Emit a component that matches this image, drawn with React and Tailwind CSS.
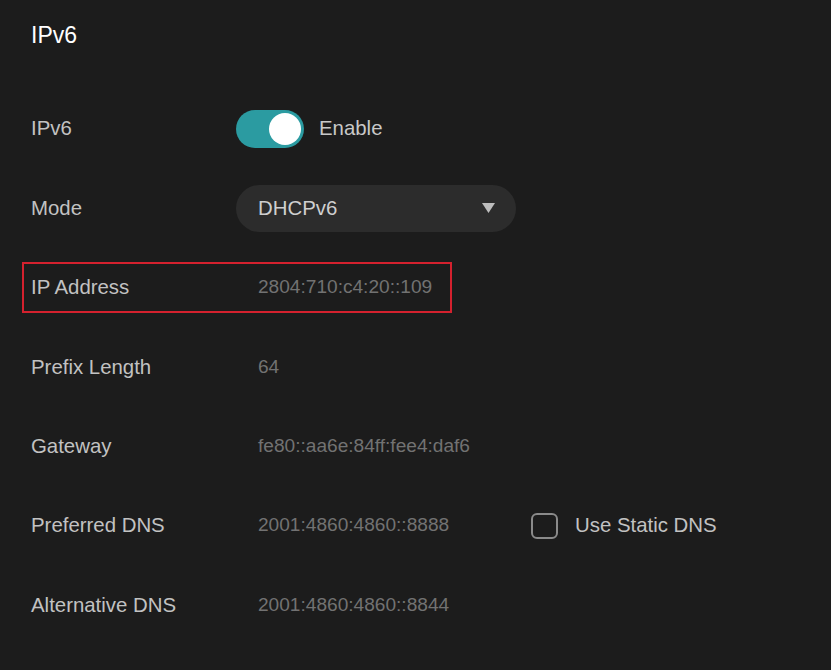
import React from "react";

const font = { fontFamily: '"Liberation Sans", Arial, sans-serif' };

function Row({ label, children, highlight }) {
  return (
    <div className="relative flex h-[79.4px] items-center">
      {highlight && (
        <div className="pointer-events-none absolute left-[-9px] top-[14px] h-[51px] w-[430px] border-2 border-[#d4212e]" />
      )}
      <div className="w-[205px] shrink-0 text-[20.4px] text-[#c2c2c2]">{label}</div>
      {children}
    </div>
  );
}

function Value({ children, className = "" }) {
  return <div className={"pl-[22px] text-[19.1px] text-[#727272] " + className}>{children}</div>;
}

export default function App() {
  return (
    <div className="min-h-screen w-full bg-[#1c1c1c] pl-[31px]" style={font}>
      <div className="flex h-[70px] items-center text-[23px] text-white">IPv6</div>

      <div className="mt-[19px]">
        <Row label="IPv6">
          <div className="flex items-center">
            <div className="flex h-[38px] w-[68px] items-center justify-end rounded-full bg-[#2b9ba1] pr-[3px]">
              <div className="h-[32px] w-[32px] rounded-full bg-white" />
            </div>
            <span className="ml-[15px] text-[20.4px] text-[#c8c8c8]">Enable</span>
          </div>
        </Row>

        <Row label="Mode">
          <div className="flex h-[47px] w-[280px] items-center justify-between rounded-full bg-[#2c2c2c] pl-[22px] pr-[21px]">
            <span className="text-[20.4px] text-[#cfcfcf]">DHCPv6</span>
            <svg width="13" height="10" viewBox="0 0 13 10">
              <path d="M0 0 L13 0 L6.5 10 Z" fill="#bdbdbd" />
            </svg>
          </div>
        </Row>

        <Row label="IP Address" highlight>
          <Value>2804:710:c4:20::109</Value>
        </Row>

        <Row label="Prefix Length">
          <Value>64</Value>
        </Row>

        <Row label="Gateway">
          <Value>fe80::aa6e:84ff:fee4:daf6</Value>
        </Row>

        <Row label="Preferred DNS">
          <Value className="w-[295px] shrink-0">2001:4860:4860::8888</Value>
          <label className="flex items-center">
            <span className="h-[26px] w-[27px] rounded-[6px] border-2 border-[#8a8a8a]" />
            <span className="ml-[17px] text-[20.4px] text-[#c2c2c2]">Use Static DNS</span>
          </label>
        </Row>

        <Row label="Alternative DNS">
          <Value>2001:4860:4860::8844</Value>
        </Row>
      </div>
    </div>
  );
}
